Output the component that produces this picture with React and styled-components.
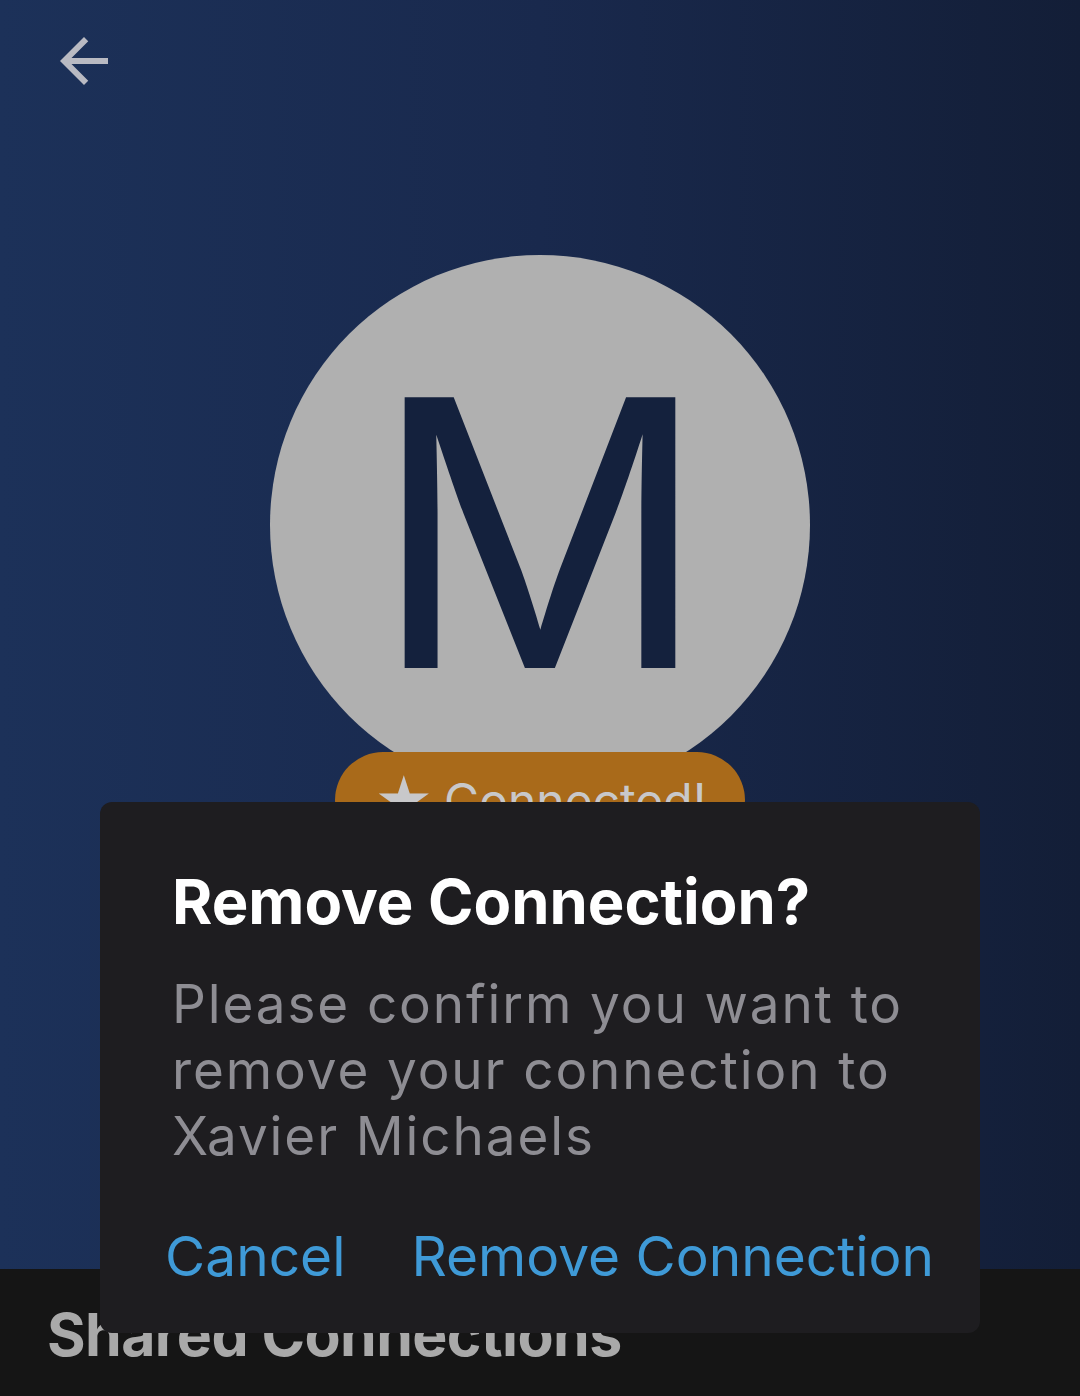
import styled, { createGlobalStyle } from 'styled-components';

const GlobalStyle = createGlobalStyle`
  * { box-sizing: border-box; }
  body {
    margin: 0;
    background: #151515;
    font-family: Inter, "Noto Sans", sans-serif;
  }
`;

const Page = styled.div`
  position: relative;
  width: 1080px;
  height: 1396px;
  overflow: hidden;
  display: flex;
  flex-direction: column;
`;

const Hero = styled.div`
  height: 1269px;
  flex-shrink: 0;
  background: linear-gradient(90deg, #1c3159 0%, #19294d 50%, #131e37 100%);
  display: flex;
  flex-direction: column;
  padding: 25px 0 0 48px;
`;

const BackButton = styled.button`
  width: 72px;
  height: 72px;
  padding: 0;
  border: none;
  background: none;
  color: #b9bac2;
  cursor: pointer;

  svg {
    display: block;
  }
`;

const Profile = styled.div`
  display: flex;
  flex-direction: column;
  align-items: center;
  margin: 158px 0 0 -48px;
`;

const Avatar = styled.div`
  width: 540px;
  height: 540px;
  border-radius: 50%;
  background: #b0b0b0;
  color: #14213d;
  display: flex;
  align-items: center;
  justify-content: center;
  font-size: 372px;
  font-weight: 400;
  line-height: 1;
  padding-top: 16px;
`;

const Badge = styled.div`
  margin-top: -43px;
  width: 410px;
  height: 96px;
  border-radius: 48px;
  background: #a96a1a;
  color: #c8c8ca;
  display: flex;
  align-items: center;
  justify-content: center;
  gap: 10px;
  font-size: 48px;
  position: relative;
`;

const Star = styled.span`
  font-size: 58px;
  line-height: 1;
  margin-top: 4px;
`;

const Section = styled.div`
  flex: 1;
  background: #151515;
  padding: 30px 47px 0;
`;

const SectionTitle = styled.h2`
  margin: 0;
  font-size: 59px;
  font-weight: 700;
  color: #a9a9a9;
  letter-spacing: -0.01em;
`;

const Overlay = styled.div`
  position: absolute;
  inset: 0;
  display: flex;
  justify-content: center;
  align-items: flex-start;
  padding-top: 802px;
`;

const Dialog = styled.div`
  width: 880px;
  height: 531px;
  background: #1e1d20;
  border-radius: 12px;
  padding: 62px 46px 0 72px;
  display: flex;
  flex-direction: column;
`;

const Title = styled.h3`
  margin: 0;
  font-size: 61.5px;
  font-weight: 700;
  color: #ffffff;
  line-height: 76px;
`;

const Message = styled.p`
  margin: 31px 0 0;
  font-size: 53px;
  line-height: 66px;
  letter-spacing: 1.9px;
  color: #8e8d93;
`;

const Actions = styled.div`
  margin-top: 54px;
  display: flex;
  justify-content: flex-end;
  gap: 66px;
`;

const ActionButton = styled.button`
  flex-shrink: 0;
  white-space: nowrap;
  border: none;
  background: none;
  padding: 0;
  font-family: Inter, sans-serif;
  font-size: 55px;
  color: #3f9ad7;
  cursor: pointer;
`;

const ArrowBack = () => (
  <svg width="72" height="72" viewBox="0 0 24 24" fill="currentColor">
    <path d="M20 11H7.83l5.59-5.59L12 4l-8 8 8 8 1.41-1.41L7.83 13H20v-2z" />
  </svg>
);

export default function App() {
  return (
    <>
      <GlobalStyle />
      <Page>
        <Hero>
          <BackButton aria-label="Back">
            <ArrowBack />
          </BackButton>
          <Profile>
            <Avatar>M</Avatar>
            <Badge>
              <Star>★</Star>
              <span>Connected!</span>
            </Badge>
          </Profile>
        </Hero>
        <Section>
          <SectionTitle>Shared Connections</SectionTitle>
        </Section>
        <Overlay>
          <Dialog>
            <Title>Remove Connection?</Title>
            <Message>
              Please confirm you want to remove your connection to Xavier Michaels
            </Message>
            <Actions>
              <ActionButton>Cancel</ActionButton>
              <ActionButton>Remove Connection</ActionButton>
            </Actions>
          </Dialog>
        </Overlay>
      </Page>
    </>
  );
}
